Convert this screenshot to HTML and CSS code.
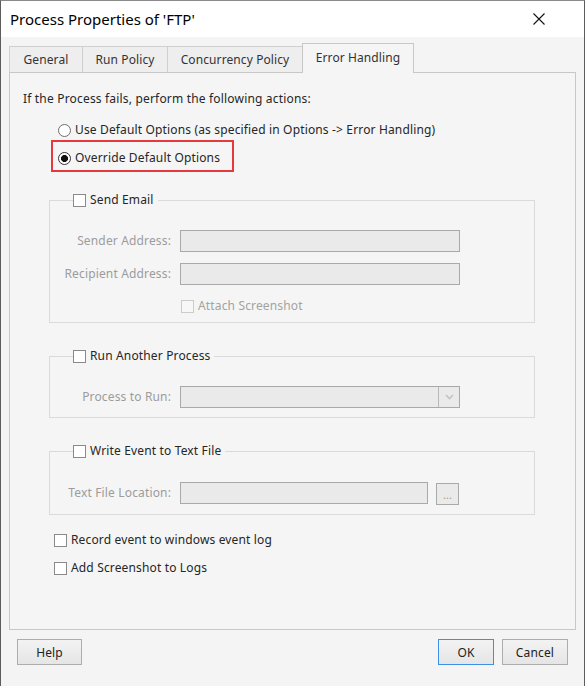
FILE: index.html
```html
<!DOCTYPE html>
<html>
<head>
<meta charset="utf-8">
<link rel="stylesheet" href="styles.css">
</head>
<body>
<div class="window">
  <div class="titlebar">
    <span class="title">Process Properties of 'FTP'</span>
    <svg class="close" width="12" height="12" viewBox="0 0 12 12"><path d="M0.5 0.5L11.5 11.5M11.5 0.5L0.5 11.5" stroke="#111" stroke-width="1.1" fill="none"/></svg>
  </div>
  <div class="client">
    <div class="tabs">
      <div class="tab tab-general">General</div>
      <div class="tab tab-run">Run Policy</div>
      <div class="tab tab-conc">Concurrency Policy</div>
      <div class="tab tab-err active">Error Handling</div>
    </div>
    <div class="panel">
      <p class="intro">If the Process fails, perform the following actions:</p>
      <div class="options">
        <div class="radio-row"><span class="radio"></span><span>Use Default Options (as specified in Options -&gt; Error Handling)</span></div>
        <div class="highlight"><div class="radio-row"><span class="radio checked"></span><span>Override Default Options</span></div></div>
      </div>

      <fieldset class="group group-email">
        <legend><span class="check"></span><span>Send Email</span></legend>
        <div class="field first"><span class="label">Sender Address:</span><span class="input"></span></div>
        <div class="field second"><span class="label">Recipient Address:</span><span class="input"></span></div>
        <div class="attach"><span class="check disabled"></span><span class="disabled-text">Attach Screenshot</span></div>
      </fieldset>

      <fieldset class="group group-run">
        <legend><span class="check"></span><span>Run Another Process</span></legend>
        <div class="field first"><span class="label">Process to Run:</span><span class="input combo"><span class="combo-btn"><svg width="9" height="6" viewBox="0 0 9 6"><path d="M1 1L4.5 4.5L8 1" stroke="#c4c4c4" stroke-width="1.6" fill="none"/></svg></span></span></div>
      </fieldset>

      <fieldset class="group group-file">
        <legend><span class="check"></span><span>Write Event to Text File</span></legend>
        <div class="field first"><span class="label">Text File Location:</span><span class="input short"></span><span class="browse">...</span></div>
      </fieldset>

      <div class="check-row first-check"><span class="check"></span><span>Record event to windows event log</span></div>
      <div class="check-row"><span class="check"></span><span>Add Screenshot to Logs</span></div>
    </div>
    <div class="buttons">
      <button class="btn btn-help">Help</button>
      <span class="spacer"></span>
      <button class="btn btn-ok">OK</button>
      <button class="btn btn-cancel">Cancel</button>
    </div>
  </div>
</div>
</body>
</html>
```
FILE: styles.css
```css
* { box-sizing: border-box; }
html, body { margin: 0; padding: 0; }
body {
  font-family: "Noto Sans", "Open Sans", sans-serif;
  font-size: 12px;
  letter-spacing: 0.15px;
  color: #262626;
  background: #f4f4f4;
}
.window {
  width: 585px;
  height: 686px;
  border-left: 1px solid #5c5c5c;
  border-right: 1px solid #5c5c5c;
  border-top: 1px solid #8a8a8a;
  background: #f4f4f4;
  display: flex;
  flex-direction: column;
}
.titlebar {
  height: 36px;
  background: #fff;
  display: flex;
  align-items: center;
  justify-content: space-between;
  padding: 0 39px 0 9px;
}
.title { font-size: 15px; color: #000; line-height: 20px; letter-spacing: 0; }
.close { display: block; }

.client { padding: 6px 8px 0 8px; display: flex; flex-direction: column; }
.tabs { display: flex; align-items: flex-end; height: 29px; }
.tab {
  height: 26px;
  border: 1px solid #cfcfcf;
  border-bottom: none;
  background: #eeeeee;
  line-height: 26px;
  text-align: center;
  margin-right: -1px;
  color: #333;
  letter-spacing: 0.1px;
}
.tab-general { width: 74px; }
.tab-run { width: 86px; }
.tab-conc { width: 136px; }
.tab-err { width: 112px; }
.tab.active {
  height: 30px;
  margin-bottom: -1px;
  background: #f5f5f5;
  border-color: #c8c8c8;
  line-height: 28px;
  position: relative;
  z-index: 1;
}
.panel {
  height: 558px;
  border: 1px solid #c8c8c8;
  background: #f5f5f5;
  padding: 18px 0 0 13px;
  display: flex;
  flex-direction: column;
  align-items: flex-start;
}
.intro { margin: 0; line-height: 16px; letter-spacing: 0.18px; }
.options { margin-left: 28px; display: flex; flex-direction: column; align-items: flex-start; }
.radio-row { display: flex; align-items: center; line-height: 16px; gap: 4px; }
.options > .radio-row { margin-top: 15px; padding-left: 7px; }
.highlight {
  margin-top: 2px;
  border: 2px solid #e5393e;
  padding: 8px 12px 4px 5px;
}
.radio {
  width: 13px; height: 13px;
  border: 1px solid #6e6e6e;
  border-radius: 50%;
  background: #fff;
  flex: none;
}
.radio.checked {
  border-color: #333;
  background: radial-gradient(circle, #111 0, #111 3.2px, #fff 3.8px);
}
.check {
  width: 13px; height: 13px;
  border: 1px solid #8a8a8a;
  background: #fff;
  flex: none;
  display: inline-block;
}
.check.disabled { border-color: #cccccc; background: #f7f7f7; }

.group {
  margin: 20px 0 0 26px;
  width: 486px;
  border: 1px solid #dadada;
  padding: 0 0 8px 0;
  min-inline-size: 0;
}
.group legend {
  display: flex;
  align-items: center;
  gap: 4px;
  line-height: 16px;
  padding: 0 4px 0 0;
  margin-left: 23px;
}
.group-run { margin-top: 25px; padding-bottom: 9px; }
.group-file { margin-top: 25px; padding-bottom: 9px; }
.field { display: flex; align-items: center; }
.field.first { margin-top: 22px; }
.field.second { margin-top: 11px; }
.label { width: 121px; text-align: right; margin-right: 9px; color: #9c9c9c; line-height: 16px; white-space: nowrap; }
.input {
  width: 280px;
  height: 22px;
  border: 1px solid #a9a9a9;
  background: #eaeaea;
  display: flex;
  justify-content: flex-end;
}
.input.short { width: 248px; }
.combo-btn {
  width: 21px;
  border-left: 1px solid #b9b9b9;
  display: flex;
  align-items: center;
  justify-content: center;
}
.browse {
  margin-left: 8px;
  margin-top: 2px;
  width: 23px;
  height: 22px;
  border: 1px solid #a9a9a9;
  background: #eaeaea;
  color: #a89a8c;
  font-size: 11px;
  line-height: 22px;
  text-align: center;
  letter-spacing: 0;
}
.attach { display: flex; align-items: center; gap: 4px; margin: 13px 0 0 131px; line-height: 16px; }
.disabled-text { color: #a3a3a3; }

.check-row { display: flex; align-items: center; gap: 4px; margin: 12px 0 0 31px; line-height: 16px; }
.check-row.first-check { margin-top: 17px; }

.buttons { display: flex; margin-top: 9px; padding: 0 8px; gap: 8px; }
.spacer { flex: 1; }
.btn {
  height: 26px;
  border: 1px solid #adadad;
  background: linear-gradient(#f3f3f3, #e5e5e5);
  font-family: inherit;
  font-size: 12px;
  letter-spacing: 0.15px;
  color: #222;
  padding: 0;
}
.btn-help { width: 65px; }
.btn-ok { width: 56px; border-color: #3d8fe8; }
.btn-cancel { width: 66px; }
```
